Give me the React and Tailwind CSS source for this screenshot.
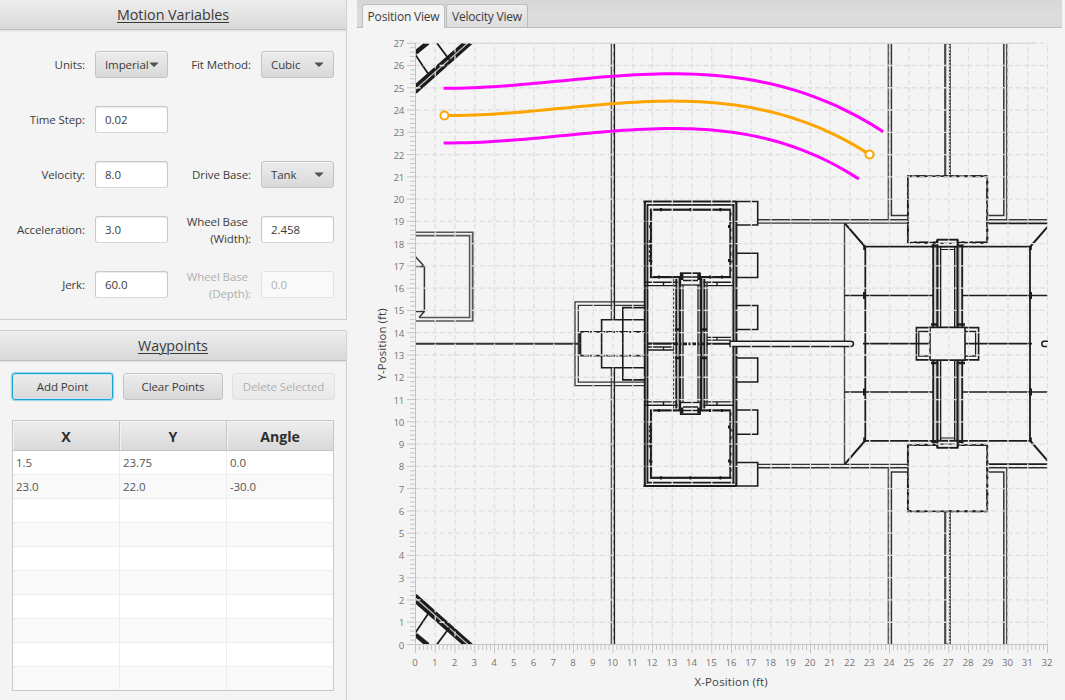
import React from "react";

const X0 = 415.5, XU = 19.75, Y0 = 644.5, YU = 22.27;
const px = (x) => X0 + x * XU;
const py = (y) => Y0 - y * YU;
const range = (n) => Array.from({ length: n }, (_, i) => i);

/* ---------- controls ---------- */

const btn = "border border-[#c3c3c3] rounded-[3px] bg-gradient-to-b from-[#ececec] to-[#d9d9d9] shadow-[inset_0_1px_0_#f6f6f6]";

function Label({ children, dim }) {
  return (
    <div className={"text-right leading-[17px] whitespace-nowrap " + (dim ? "text-[#b0b0b0]" : "text-[#3c3c3c]")}>
      {children}
    </div>
  );
}

function Field({ value, dim }) {
  return (
    <div
      className={
        "h-[27px] rounded-[3px] border pl-[9px] flex items-center " +
        (dim
          ? "border-[#e2e2e2] bg-[#f9f9f9] text-[#b0b0b0]"
          : "border-[#c8c8c8] border-b-[#d8d8d8] bg-white text-[#3c3c3c] shadow-[inset_0_1px_1px_#ececec]")
      }
    >
      {value}
    </div>
  );
}

function Combo({ value }) {
  return (
    <div className={"h-[27px] pl-[9px] pr-[9px] flex items-center justify-between text-[#3c3c3c] " + btn}>
      <span>{value}</span>
      <svg width="10" height="6" viewBox="0 0 10 6" className="shrink-0">
        <path d="M0.5 0.5 H9.5 Q8.8 1.6 5 5 Q1.2 1.6 0.5 0.5Z" fill="#505050" />
      </svg>
    </div>
  );
}

function PanelHeader({ children, className }) {
  return (
    <div
      className={
        "flex items-center justify-center border-b border-[#bdbdbd] bg-gradient-to-b from-[#eeeeee] to-[#d8d8d8] text-[14.3px] tracking-[-0.01px] text-[#3a3a3a] underline underline-offset-2 decoration-1 shadow-[0_1px_2px_#dedede] " +
        className
      }
    >
      {children}
    </div>
  );
}

function MotionVariables() {
  return (
    <section className="h-[320px] w-[347px] border-r border-b border-[#cfcfcf]">
      <PanelHeader className="h-[30px]">Motion Variables</PanelHeader>
      <div className="mt-[7px] grid grid-cols-[85px_73px_73px_73px] gap-x-[10px] auto-rows-[55px] items-center">
        <Label>Units:</Label>
        <Combo value="Imperial" />
        <Label>Fit Method:</Label>
        <Combo value="Cubic" />
        <Label>Time Step:</Label>
        <Field value="0.02" />
        <span />
        <span />
        <Label>Velocity:</Label>
        <Field value="8.0" />
        <Label>Drive Base:</Label>
        <Combo value="Tank" />
        <Label>Acceleration:</Label>
        <Field value="3.0" />
        <Label><span className="mr-[3px]">Wheel Base</span><br />(Width):</Label>
        <Field value="2.458" />
        <Label>Jerk:</Label>
        <Field value="60.0" />
        <Label dim><span className="mr-[3px]">Wheel Base</span><br />(Depth):</Label>
        <Field value="0.0" dim />
      </div>
    </section>
  );
}

const points = [
  ["1.5", "23.75", "0.0"],
  ["23.0", "22.0", "-30.0"],
];

function Waypoints() {
  return (
    <section className="mt-[10px] h-[370px] w-[347px] border-t border-r border-[#cfcfcf] rounded-tr-[3px]">
      <PanelHeader className="h-[30px]">Waypoints</PanelHeader>
      <div className="mt-[12px] ml-[12px] flex h-[27px] text-[#3c3c3c]">
        <div className="w-[101px] flex items-center justify-center rounded-[3px] border border-[#1ea0d0] bg-gradient-to-b from-[#ececec] to-[#d9d9d9] shadow-[0_0_1px_1px_#8ed3ec,inset_0_0_0_1px_#c5e8f4]">
          Add Point
        </div>
        <div className={"ml-[10px] w-[100px] flex items-center justify-center " + btn}>Clear Points</div>
        <div className="ml-[9px] w-[103px] flex items-center justify-center rounded-[3px] border border-[#e0e0e0] bg-gradient-to-b from-[#f1f1f1] to-[#e9e9e9] text-[#b0b0b0]">
          Delete Selected
        </div>
      </div>
      <div className="mt-[20px] ml-[12px] w-[322px] h-[271px] border border-[#c8c8c8] bg-white flex flex-col overflow-hidden">
        <div className="flex h-[30px] shrink-0 border-b border-[#c2c2c2] bg-gradient-to-b from-[#eeeeee] to-[#d9d9d9] text-[14.2px] font-bold text-[#2f2f2f]">
          {["X", "Y", "Angle"].map((h) => (
            <div key={h} className="w-[107px] shrink-0 pt-[3px] flex items-center justify-center border-r border-[#c6c6c6] shadow-[inset_1px_1px_0_#f3f3f3]">
              {h}
            </div>
          ))}
        </div>
        {range(10).map((r) => (
          <div key={r} className={"flex h-[24px] shrink-0 border-b border-[#ededed] text-[#555] last:border-b-0 " + (r % 2 ? "bg-[#f9f9f9]" : "bg-white")}>
            {range(3).map((c) => (
              <div key={c} className="w-[107px] shrink-0 pl-[3px] pt-px flex items-center border-r border-[#ededed] last:border-r-0">
                {points[r] ? points[r][c] : ""}
              </div>
            ))}
          </div>
        ))}
      </div>
    </section>
  );
}

/* ---------- chart ---------- */

function Tower() {
  return (
    <g>
      <path d="M643.5 201.6H736.5" strokeWidth="2" />
      <path d="M646 204.9H735" strokeWidth="1.6" />
      <path d="M644.9 201V343.7M736.3 201V343.7" strokeWidth="2.3" />
      <path d="M647.6 204V343.7M733.2 204V343.7" strokeWidth="1.6" />
      <path d="M646.3 204V343.7M734.8 204V343.7" strokeWidth="1.4" stroke="#888" />
      <rect x="651" y="209.7" width="79.4" height="67.4" strokeWidth="2.2" />
      <path d="M660 209.7h2M689.5 209.7h2M719.5 209.7h2M650.8 225v3M650.8 259v3M729.6 225v3M729.6 259v3M658 277h2M709 277h2M721 277h2" strokeWidth="3.2" />
      <path d="M649.3 240V261M732 250V262" strokeWidth="1" strokeDasharray="3 2" />
      <path d="M645 282.3H681M700 282.3H734M645 285.6H677M705 285.6H734M663.5 282v4M717 282v4" strokeWidth="1.4" />
      <path d="M673.6 279V343.7" strokeWidth="1.2" strokeDasharray="3 1.5" stroke="#555" />
      <path d="M676.3 279V343.7M704.3 279V343.7" strokeWidth="2" />
      <path d="M680 277V343.7M700.8 277V343.7" strokeWidth="2.4" />
      <path d="M683 279V343.7M698 279V343.7M707 282V343.7" strokeWidth="1.6" stroke="#444" />
      <path d="M678.3 279V343.7M702.6 279V343.7" strokeWidth="1.2" stroke="#999" />
      <rect x="680.5" y="273.3" width="19.7" height="11.7" fill="#f4f4f4" strokeWidth="1.3" />
      <path d="M680 273.3H700.5M683 277H698M683 280.5H698" strokeWidth="1.5" />
      <path d="M681.7 274v6M699 274v6" strokeWidth="3.4" />
      <path d="M675 329.5h5M702 329.5h5" strokeWidth="2.4" />
      <path d="M736.5 201.5H757.7V225H736.5M736.5 253.3H757.7V277.5H736.5M736.5 305.5H757.7V329.5H736.5" strokeWidth="1.6" />
    </g>
  );
}

/* Everything above the field's centre line; the lower half is its mirror. */
function HalfField() {
  return (
    <g fill="none" stroke="#1c1c1c">
      <path d="M415.5 92.3L471.5 42.5" strokeWidth="3.4" />
      <path d="M415.5 86.4L465.5 42.5" strokeWidth="4" />
      <path d="M415.5 89.4L468.5 42.5" strokeWidth="1.2" stroke="#bbb" />
      <path d="M415.5 55L429.5 75.8M436.5 42.5L449.5 60" strokeWidth="1.8" />
      <path d="M415.5 52.8L428 42.5" strokeWidth="4.6" />

      <path d="M611.4 43.3V319.5" strokeWidth="1.5" stroke="#555" />
      <path d="M614.3 43.3V319.5" strokeWidth="1.6" />
      <path d="M575 343.7V301.8H644M578.3 343.7V305.4H644" strokeWidth="1.3" stroke="#333" />
      <path d="M601.6 343.7V319.7H644M622.8 343.7V307.6H644" strokeWidth="1.6" />
      <path d="M580.2 343.7V331.9" strokeWidth="2.2" />
      <path d="M580.2 331.9H644" strokeWidth="1.6" strokeDasharray="9 1 2 1" />

      <Tower />

      <path d="M757.7 219.7H907.7M757.7 223.1H907.7M988 219.7H1047.5" strokeWidth="1.4" stroke="#333" />
      <path d="M988 223.3H1047.5" strokeWidth="1.8" />
      <path d="M844.5 223V343.7" strokeWidth="1.4" stroke="#444" />
      <path d="M844.8 223.3L865.3 247M1030 247L1047.5 226.8" strokeWidth="2" />
      <path d="M865.3 343.7V246.7H933M962 246.7H1030V343.7" strokeWidth="1.8" />
      <path d="M864.5 246v4M1030.5 246v4M864.3 292v7M1030.7 292v7" strokeWidth="2.6" />
      <path d="M844.5 295.4H933M962 295.4H1047.5" strokeWidth="1.5" />

      <path d="M888.4 43.3V219.5M1006.7 43.3V219.5" strokeWidth="1.6" stroke="#555" />
      <path d="M891.4 43.3V215.6H908M987.5 215.6H1003.8V43.3" strokeWidth="1.5" stroke="#333" />
      <path d="M945.2 43.3V176" strokeWidth="2.2" stroke="#4a4a4a" />
      <path d="M949.8 43.3V176" strokeWidth="1.8" strokeDasharray="2 1.3" />
      <path d="M950.4 43.3V176M944.2 43.8H950" strokeWidth="0.9" stroke="#555" />

      <path d="M933.2 244V327M962.2 244V327" strokeWidth="1.9" />
      <path d="M937.4 240V327M957.5 240V327" strokeWidth="2.3" />
      <path d="M940.6 243V327M954.7 243V327" strokeWidth="1.4" />
      <path d="M935 244V327M959.8 244V327" strokeWidth="0.9" stroke="#aaa" />
      <path d="M931 324.5h6M958 324.5h7" strokeWidth="2.4" />
      <rect x="908" y="176.2" width="79.3" height="66.4" strokeWidth="1.6" />
      <rect x="908" y="176.2" width="79.3" height="66.4" strokeWidth="2.1" strokeDasharray="4 3 11 2 3 5" />
      <rect x="937.5" y="239.7" width="20" height="7" strokeWidth="1.9" fill="#f4f4f4" />
      <path d="M940 243.4H955M940 249.5H955" strokeWidth="1.1" />
      <path d="M931.5 246h5M958.5 246h5" strokeWidth="3" />
      <path d="M930 343.7V327.4H965V343.7M916.4 343.7V327.6H930M965 327.6H978.6V343.7" strokeWidth="1.6" />
      <path d="M918.8 343.7V331.5H930M965 331.5H975.6V343.7" strokeWidth="1.3" />
    </g>
  );
}

function FieldMap() {
  return (
    <g clipPath="url(#plotClip)">
      <HalfField />
      <g transform="translate(0 687.5) scale(1 -1)">
        <HalfField />
      </g>
      <g fill="none" stroke="#1c1c1c">
        <g stroke="#555" strokeWidth="1.6">
          <path d="M415.5 232.3H472.8V321H415.5M415.5 235.6H469.6V317.5H419" />
          <path d="M471.2 234V319.5" stroke="#c4c4c4" strokeWidth="1.2" />
        </g>
        <path d="M415.5 256.8L424.4 266.5V311.4L419 317.5M415.5 266.5H424.4M415.5 311.4H424.4" strokeWidth="1.5" stroke="#333" />
        <path d="M415.5 343.7H580" strokeWidth="1.9" stroke="#333" />
        <path d="M647 343.6H674M707 343.7H730" strokeWidth="2.1" />
        <path d="M647 347H674M647 350H674M663.5 347v3M707 337.4H732M707 340.2H732M717 337v3" strokeWidth="1.3" />
        <path d="M674 343.8H708" strokeWidth="2.8" strokeDasharray="4 1.5 2 1.5" />
        <path d="M730 341.2H850.5Q853.5 341.2 853.5 343.8Q853.5 346.4 850.5 346.4H730Z" fill="#f4f4f4" strokeWidth="1.5" />
        <path d="M1049 341.2H1044Q1041.8 341.2 1041.8 343.8Q1041.8 346.4 1044 346.4H1049" strokeWidth="1.5" />
        <path d="M863 343.7H930M965 343.7H1032" strokeWidth="1.8" />
      </g>
    </g>
  );
}

/* Centre path is a cubic with end headings 0 and -30 degrees; wheels run parallel. */
function trajectories() {
  const d = 21.5, s = Math.tan(-Math.PI / 6), dy = -1.75;
  const b = (s - (2 * dy) / d) / (d * d);
  const a = (dy / d - b * d * d) / d;
  const mid = [], up = [], low = [];
  range(61).forEach((i) => {
    const t = (i / 60) * d;
    const x = 1.5 + t, y = 23.75 + a * t * t + b * t * t * t;
    const m = 2 * a * t + 3 * b * t * t;
    const n = 1.229 / Math.hypot(1, m);
    const sag = 0.8 * Math.sin((Math.PI * t) / d);
    mid.push(`${px(x)},${py(y) + sag}`);
    up.push(`${px(x - m * n)},${py(y + n) + sag}`);
    low.push(`${px(x + m * n)},${py(y - n) + sag}`);
  });
  return { mid: mid.join(" "), up: up.join(" "), low: low.join(" ") };
}

function Chart() {
  const t = trajectories();
  return (
    <svg width="708" height="672" viewBox="357 28 708 672" className="block">
      <defs>
        <clipPath id="plotClip"><rect x="415.5" y="43.3" width="632.5" height="601.2" /></clipPath>
      </defs>
      <FieldMap />
      <g stroke="#dedede" strokeWidth="1.3" strokeDasharray="5 3">
        {range(32).map((i) => <line key={i} x1={px(i + 1)} x2={px(i + 1)} y1={Y0} y2={py(27)} />)}
        {range(27).map((i) => <line key={i} x1={X0} x2={px(32)} y1={py(i + 1)} y2={py(i + 1)} />)}
      </g>
      <path d="M470 43.4H1035" stroke="#d6d6d6" strokeWidth="1" />
      <g stroke="#c4c4c4" strokeWidth="1">
        <path d="M415.5 43V644.5H1048" fill="none" />
        {range(161).map((i) => <line key={i} x1={px(i / 5)} x2={px(i / 5)} y1="645" y2={i % 5 ? 650 : 653} />)}
        {range(136).map((i) => <line key={i} y1={py(i / 5)} y2={py(i / 5)} x2="415" x1={i % 5 ? 410 : 407} />)}
      </g>
      <g fill="#747474" fontSize="9.7">
        {range(33).map((i) => <text key={i} x={px(i) - 0.5} y="666.3" textAnchor="middle">{i}</text>)}
        {range(28).map((i) => <text key={i} x="404.3" y={py(i) + 4} textAnchor="end">{i}</text>)}
      </g>
      <g fill="#3c3c3c" fontSize="11.4">
        <text x="731" y="686.3" textAnchor="middle" textLength="73">X-Position (ft)</text>
        <text transform="translate(385.8 344.5) rotate(-90)" textAnchor="middle" textLength="72">Y-Position (ft)</text>
      </g>
      <g fill="none" strokeWidth="3" strokeLinecap="square">
        <polyline points={t.up} stroke="#ff00ff" />
        <polyline points={t.low} stroke="#ff00ff" />
        <polyline points={t.mid} stroke="#ffa500" />
        <circle cx={px(1.5) - 0.7} cy={py(23.75)} r="4" fill="#fff" stroke="#ffa500" strokeWidth="2" />
        <circle cx={px(23) - 0.2} cy={py(22)} r="4" fill="#fff" stroke="#ffa500" strokeWidth="2" />
      </g>
    </svg>
  );
}

function ChartPane() {
  return (
    <main className="w-[708px] ml-[10px]">
      <div className="h-[28px] w-[705px] flex items-end border-b border-[#bcbcbc] bg-gradient-to-b from-[#d6d6d6] via-[#dcdcdc] to-[#dadada] pl-[5px] text-[12px] tracking-[-0.2px] text-[#3c3c3c]">
        <div className="w-[83px] h-[24px] -mb-px pt-px flex items-center justify-center rounded-t-[3px] border border-b-0 border-[#bdbdbd] bg-[#f4f4f4] whitespace-nowrap">
          Position View
        </div>
        <div className="ml-px w-[82px] h-[23px] pt-[2px] flex items-center justify-center rounded-t-[3px] border border-b-0 border-[#bdbdbd] bg-gradient-to-b from-[#ededed] to-[#dcdcdc] whitespace-nowrap">
          Velocity View
        </div>
      </div>
      <Chart />
    </main>
  );
}

export default function App() {
  return (
    <div className="flex h-[700px] w-[1065px] overflow-hidden bg-[#f4f4f4] font-['Open_Sans','Noto_Sans',sans-serif] text-[11.5px] tracking-[-0.09px]">
      <aside className="w-[347px] shrink-0">
        <MotionVariables />
        <Waypoints />
      </aside>
      <ChartPane />
    </div>
  );
}
